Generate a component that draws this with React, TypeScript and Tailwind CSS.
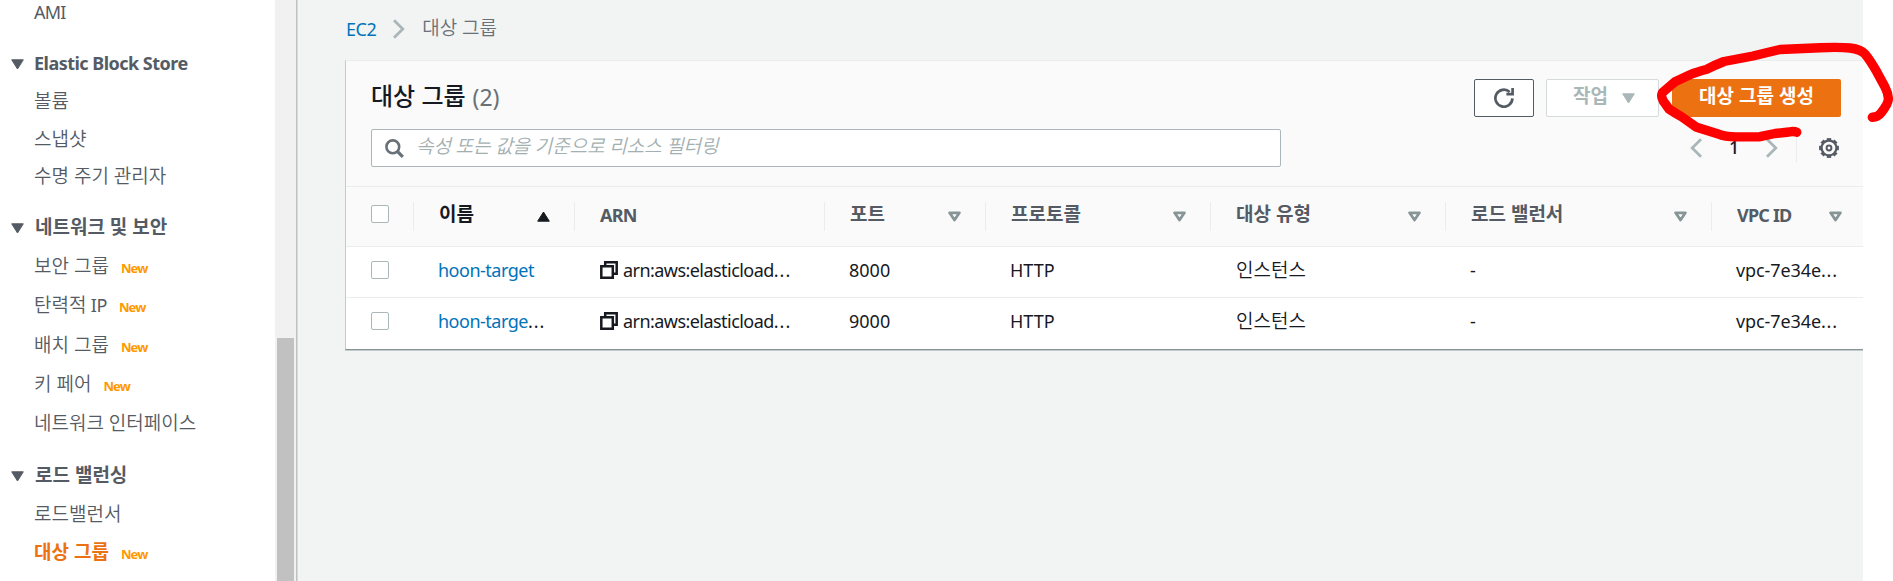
import type { ReactNode } from "react";

type NavItem = { label: string; latin?: string; h: string; isNew?: boolean; active?: boolean };

const ebs: NavItem[] = [
  { label: "볼륨", h: "h-[38px]" },
  { label: "스냅샷", h: "h-[38px]" },
  { label: "수명 주기 관리자", h: "h-[36px]" },
];
const network: NavItem[] = [
  { label: "보안 그룹", h: "h-[39px]", isNew: true },
  { label: "탄력적", latin: "IP", h: "h-[40px]", isNew: true },
  { label: "배치 그룹", h: "h-[39px]", isNew: true },
  { label: "키 페어", h: "h-[39px]", isNew: true },
  { label: "네트워크 인터페이스", h: "h-[40px]" },
];
const balancing: NavItem[] = [
  { label: "로드밸런서", h: "h-[39px]" },
  { label: "대상 그룹", h: "h-[38px]", isNew: true, active: true },
];

function Triangle({ className }: { className: string }) {
  return (
    <svg className={className} width="13" height="11" viewBox="0 0 13 11" fill="currentColor" stroke="currentColor" strokeWidth="1" strokeLinejoin="round">
      <path d="M.7 .8h11.6L6.5 10z" />
    </svg>
  );
}

function SortIcon() {
  return (
    <svg className="shrink-0 text-[#879596]" width="13" height="11" viewBox="0 0 13 11" fill="none" stroke="currentColor" strokeWidth="2.8" strokeLinejoin="round">
      <path d="M1.6 1.8h9.8L6.5 9z" />
    </svg>
  );
}

function NavTitle({ children, className, latin }: { children: ReactNode; className: string; latin?: boolean }) {
  return (
    <div className={`flex items-center pl-[11px] text-[#545b64] ${className}`}>
      <Triangle className="mt-[3px] shrink-0" />
      <span className={latin ? "ml-[10px] text-[18px] font-bold tracking-[-0.52px]" : "ml-[11px] text-[19px] font-semibold"}>{children}</span>
    </div>
  );
}

function NavRow({ item }: { item: NavItem }) {
  return (
    <div className={`flex items-center pl-[34px] ${item.h}`}>
      <span className={item.active ? "text-[19px] font-semibold text-[#ec7211]" : "text-[19px] font-[350] text-[#545b64]"}>
        {item.label}
        {item.latin && <span className="text-[18px] font-normal tracking-[-0.4px]"> {item.latin}</span>}
      </span>
      {item.isNew && (
        <span className="mt-[4px] ml-[12px] text-[13px] font-bold tracking-[-0.9px] text-[#ff9900]">New</span>
      )}
    </div>
  );
}

function Checkbox() {
  return <span className="block h-[18px] w-[18px] rounded-[2px] border border-[#aab7b8] bg-white" />;
}

function Chevron({ flip, className }: { flip?: boolean; className?: string }) {
  return (
    <svg className={className} width="12" height="20" viewBox="0 0 12 20" fill="none" stroke="#aab7b8" strokeWidth="2.8">
      <path d={flip ? "M11 1.2 2.2 10 11 18.8" : "M1 1.2 9.8 10 1 18.8"} />
    </svg>
  );
}

const grid = "grid grid-cols-[68px_161px_250px_161px_225px_235px_266px_151px]";

function HeadCell({ label, latin, sort, last, dark }: { label: string; latin?: boolean; sort?: ReactNode; last?: boolean; dark?: boolean }) {
  return (
    <div
      className={`flex h-[29px] items-center justify-between pl-[25px] ${last ? "pr-[21px]" : "border-r border-[#eaeded] pr-[24px]"} ${dark ? "text-[#16191f]" : "text-[#545b64]"}`}
    >
      <span className={latin ? "-mt-[4px] text-[18px] font-bold tracking-[-0.8px]" : "-mt-[6px] text-[19px] font-semibold"}>{label}</span>
      {sort}
    </div>
  );
}

function CopyIcon() {
  return (
    <svg className="mr-[5px] shrink-0" width="18" height="18" viewBox="0 0 18 18" fill="none" stroke="#16191f" strokeWidth="2.5">
      <path d="M1.3 5.2h11.5v11.5H1.3z" />
      <path d="M5.2 5V1.3h11.5v11.5H13" />
    </svg>
  );
}

function Row({ name, cut, port, height }: { name: string; cut?: boolean; port: string; height: string }) {
  return (
    <div className={`${grid} ${height} items-center text-[18px] text-[#16191f]`}>
      <div className="pl-[25px]"><Checkbox /></div>
      <div className="pl-6 tracking-[-0.5px]">
        <span className="text-[#0073bb]">{name}</span>
        {cut && <span className="tracking-[1px]">...</span>}
      </div>
      <div className="flex items-center pl-[25px] tracking-[-0.55px]">
        <CopyIcon />
        <span>arn:aws:elasticload<span className="tracking-[1px]">...</span></span>
      </div>
      <div className="pl-[24px]">{port}</div>
      <div className="pl-[24px]">HTTP</div>
      <div className="-mt-[1px] pl-[25px] text-[19px] font-[350]">인스턴스</div>
      <div className="pl-[24px]">-</div>
      <div className="pl-[24px] tracking-[-0.1px]">vpc-7e34e<span className="tracking-[0.8px]">...</span></div>
    </div>
  );
}

function Gear() {
  const teeth = [0, 45, 90, 135, 180, 225, 270, 315];
  return (
    <svg width="20" height="20" viewBox="0 0 20 20" fill="none" stroke="#545b64">
      <circle cx="10" cy="10" r="7.4" strokeWidth="2.2" />
      {teeth.map((a) => (
        <path key={a} d="M7.8 1.2h4.4" strokeWidth="2.2" transform={`rotate(${a} 10 10)`} />
      ))}
      <circle cx="10" cy="10" r="2.4" strokeWidth="2" />
    </svg>
  );
}

export default function App() {
  return (
    <div className="relative flex h-[581px] w-[1893px] overflow-hidden bg-white font-['Noto_Sans','Noto_Sans_CJK_KR',sans-serif] leading-[24px] whitespace-nowrap">
      <nav className="flex w-[275px] shrink-0 flex-col">
        <div className="h-[24px] pl-[34px] text-[18px] tracking-[-0.8px] text-[#545b64]">AMI</div>
        <NavTitle className="mt-[20px] h-[38px]" latin>Elastic Block Store</NavTitle>
        {ebs.map((i) => <NavRow key={i.label} item={i} />)}
        <NavTitle className="mt-[14px] h-[38px]">네트워크 및 보안</NavTitle>
        {network.map((i) => <NavRow key={i.label} item={i} />)}
        <NavTitle className="mt-[13px] h-[38px]">로드 밸런싱</NavTitle>
        {balancing.map((i) => <NavRow key={i.label} item={i} />)}
      </nav>
      <div className="flex w-[21px] shrink-0 flex-col bg-[#f1f1f1] pt-[338px] pl-[2px]">
        <div className="w-[17px] flex-1 bg-[#c1c1c1]" />
      </div>
      <div className="w-[2px] shrink-0 border-r border-[#d5dbdb] bg-[#bcc2c3]" />

      <main className="flex w-[1565px] shrink-0 flex-col bg-[#f2f3f3] pl-[47px]">
        <div className="flex h-[60px] items-center pb-[3px] pl-px">
          <span className="text-[18px] tracking-[-0.5px] text-[#0073bb]">EC2</span>
          <Chevron className="ml-[17px]" />
          <span className="-mt-[2px] ml-[17px] text-[19px] font-[350] text-[#687078]">대상 그룹</span>
        </div>

        <section className="border-t border-b border-l border-t-[#eaeded] border-b-[#879596] border-l-[#c3cacb] bg-white shadow-[0_1px_0_#c3cacb]">
          <div className="flex h-[125px] flex-col bg-[#fafafa] pt-[18px] pr-[22px] pl-[25px]">
            <div className="flex h-[38px] items-center">
              <h1 className="-mt-[4px] flex items-center text-[24px]">
                <span className="font-medium text-[#16191f]">대상 그룹</span>
                <span className="mt-[1px] ml-[7px] text-[23px] text-[#687078]">(2)</span>
              </h1>
              <button className="ml-auto flex h-[38px] w-[60px] items-center justify-center rounded-[2px] border border-[#545b64] bg-white">
                <svg width="20" height="20" viewBox="0 0 20 20" fill="none" stroke="#545b64" strokeWidth="2.7">
                  <path d="M18.4 10.4A8.5 8.5 0 1 1 15.6 3.9" />
                  <path d="M12.4 6.2h6.2V0" />
                </svg>
              </button>
              <button className="ml-[12px] flex h-[38px] w-[113px] items-center rounded-[2px] border border-[#d5dbdb] bg-white pl-[26px] text-[#aab7b8]">
                <span className="-mt-[5px] text-[19px] font-semibold">작업</span>
                <Triangle className="mt-[1px] ml-[14px]" />
              </button>
              <button className="ml-[13px] flex h-[38px] w-[169px] items-center justify-center rounded-[2px] bg-[#ec7211] pb-[5px] text-[19px] font-semibold text-white">
                대상 그룹 생성
              </button>
            </div>
            <div className="mt-[12px] flex h-[38px] items-center">
              <div className="flex h-[38px] w-[910px] items-center rounded-[2px] border border-[#aab7b8] bg-white pl-[13px]">
                <svg width="19" height="19" viewBox="0 0 19 19" fill="none" stroke="#687078" strokeWidth="2.6">
                  <circle cx="7.8" cy="7.8" r="6.4" />
                  <path d="m12.4 12.4 5.4 5.4" strokeWidth="3.2" />
                </svg>
                <span className="-mt-[4px] ml-[12px] text-[19px] font-[350] tracking-[-0.1px] text-[#a3b0b1] italic">속성 또는 값을 기준으로 리소스 필터링</span>
              </div>
              <div className="mr-[2px] ml-auto flex h-[30px] items-center">
                <Chevron flip />
                <span className="-mt-[2px] mr-[26px] ml-[27px] w-[11px] text-[18px] font-medium text-[#16191f]">1</span>
                <Chevron />
                <div className="mr-[22px] ml-[18px] h-[30px] w-px bg-[#eaeded]" />
                <Gear />
              </div>
            </div>
          </div>
          <div className={`${grid} h-[61px] items-center border-y border-[#eaeded] bg-[#fafafa]`}>
            <div className="flex h-[29px] items-center border-r border-[#eaeded] pb-[5px] pl-[25px]"><Checkbox /></div>
            <HeadCell label="이름" dark sort={<Triangle className="rotate-180" />} />
            <HeadCell label="ARN" latin />
            <HeadCell label="포트" sort={<SortIcon />} />
            <HeadCell label="프로토콜" sort={<SortIcon />} />
            <HeadCell label="대상 유형" sort={<SortIcon />} />
            <HeadCell label="로드 밸런서" sort={<SortIcon />} />
            <HeadCell label="VPC ID" latin last sort={<SortIcon />} />
          </div>
          <Row name="hoon-target" port="8000" height="h-[50px] pb-[4px]" />
          <div className="h-px bg-[#eaeded]" />
          <Row name="hoon-targe" cut port="9000" height="h-[51px] pb-[5px]" />
        </section>
      </main>

      <svg className="pointer-events-none absolute top-0 left-0" width="1893" height="581" viewBox="0 0 1893 581" fill="none" stroke="#ff0000" strokeWidth="9.4" strokeLinecap="round" strokeLinejoin="round">
        <path d="M1872.3 117.3Q1878 117 1881 113Q1889 103 1888.3 98Q1888 93 1885 87L1876.7 71.7Q1870 60 1865 54Q1861 49.5 1850 48Q1840 47 1820 47.7L1780 49.5Q1765 53 1753 56L1724 61.5Q1715 65 1707 69.2Q1696 72 1690 74.7L1675 81.7L1662.5 92.5Q1660.5 96 1663.3 101L1669 109Q1675 113 1682 117L1696.7 127.3L1718.3 134Q1725 137 1736.7 136.9L1760 136.7Q1768 135 1775 133.5L1789 132Q1794 131 1796.7 132.3" />
      </svg>
    </div>
  );
}
